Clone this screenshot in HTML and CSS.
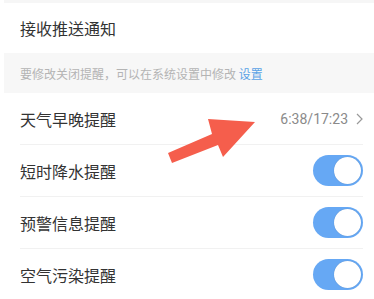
FILE: index.html
```html
<!DOCTYPE html>
<html lang="zh">
<head>
<meta charset="utf-8">
<link rel="stylesheet" href="styles.css">
</head>
<body>
<div class="page">
  <div class="strip"></div>
  <div class="head-row">接收推送通知</div>
  <div class="hint">要修改关闭提醒，可以在系统设置中修改 <span class="link">设置</span></div>
  <ul class="list">
    <li class="item"><span class="label">天气早晚提醒</span><span class="value">6:38/17:23<svg class="chev" viewBox="0 0 7 12" width="7" height="12"><path d="M1 1 L6 6 L1 11" fill="none" stroke="#999" stroke-width="1.2"/></svg></span></li>
    <li class="item"><span class="label">短时降水提醒</span><span class="toggle"><span class="knob"></span></span></li>
    <li class="item"><span class="label">预警信息提醒</span><span class="toggle"><span class="knob"></span></span></li>
    <li class="item"><span class="label">空气污染提醒</span><span class="toggle"><span class="knob"></span></span></li>
  </ul>
  <svg class="arrow" width="374" height="299" viewBox="0 0 374 299">
    <polygon points="168,153 212,134 208,119 255,122 223,157 218,145 172,163" fill="#f55e4c"/>
  </svg>
</div>
</body>
</html>
```
FILE: styles.css
```css
html, body {
  margin: 0;
  padding: 0;
  background: #fff;
}
.page {
  position: relative;
  width: 374px;
  height: 299px;
  overflow: hidden;
  font-family: "Noto Sans CJK SC", "Noto Sans", sans-serif;
  color: #333;
}
.strip {
  height: 3px;
  margin-left: 4px;
  background: #f6f6f6;
}
.head-row {
  height: 50px;
  display: flex;
  align-items: center;
  padding-left: 20px;
  font-size: 16px;
}
.hint {
  height: 40px;
  margin-left: 4px;
  padding-left: 16px;
  display: flex;
  align-items: center;
  background: #f7f7f7;
  font-size: 12px;
  color: #b4b4b4;
  white-space: pre;
}
.link {
  color: #5aa2e6;
}
.list {
  list-style: none;
  margin: 0;
  padding: 0;
}
.item {
  height: 52px;
  margin: 0 11px 0 20px;
  display: flex;
  align-items: center;
  justify-content: space-between;
  border-bottom: 1px solid #f1f1f1;
  box-sizing: border-box;
}
.label {
  font-size: 16px;
  color: #333;
}
.value {
  display: flex;
  align-items: center;
  gap: 8px;
  font-family: "Roboto", "Noto Sans", sans-serif;
  font-size: 14px;
  color: #8a8a8a;
}
.chev {
  display: block;
}
.toggle {
  width: 50px;
  height: 31px;
  border-radius: 16px;
  background: #66a8f4;
  display: flex;
  align-items: center;
  justify-content: flex-end;
  padding: 0 2px;
  box-sizing: border-box;
}
.knob {
  width: 27px;
  height: 27px;
  border-radius: 50%;
  background: #fff;
  box-shadow: 0 0 1px rgba(0,0,0,0.25);
}
.arrow {
  position: absolute;
  left: 0;
  top: 0;
  pointer-events: none;
}
```
